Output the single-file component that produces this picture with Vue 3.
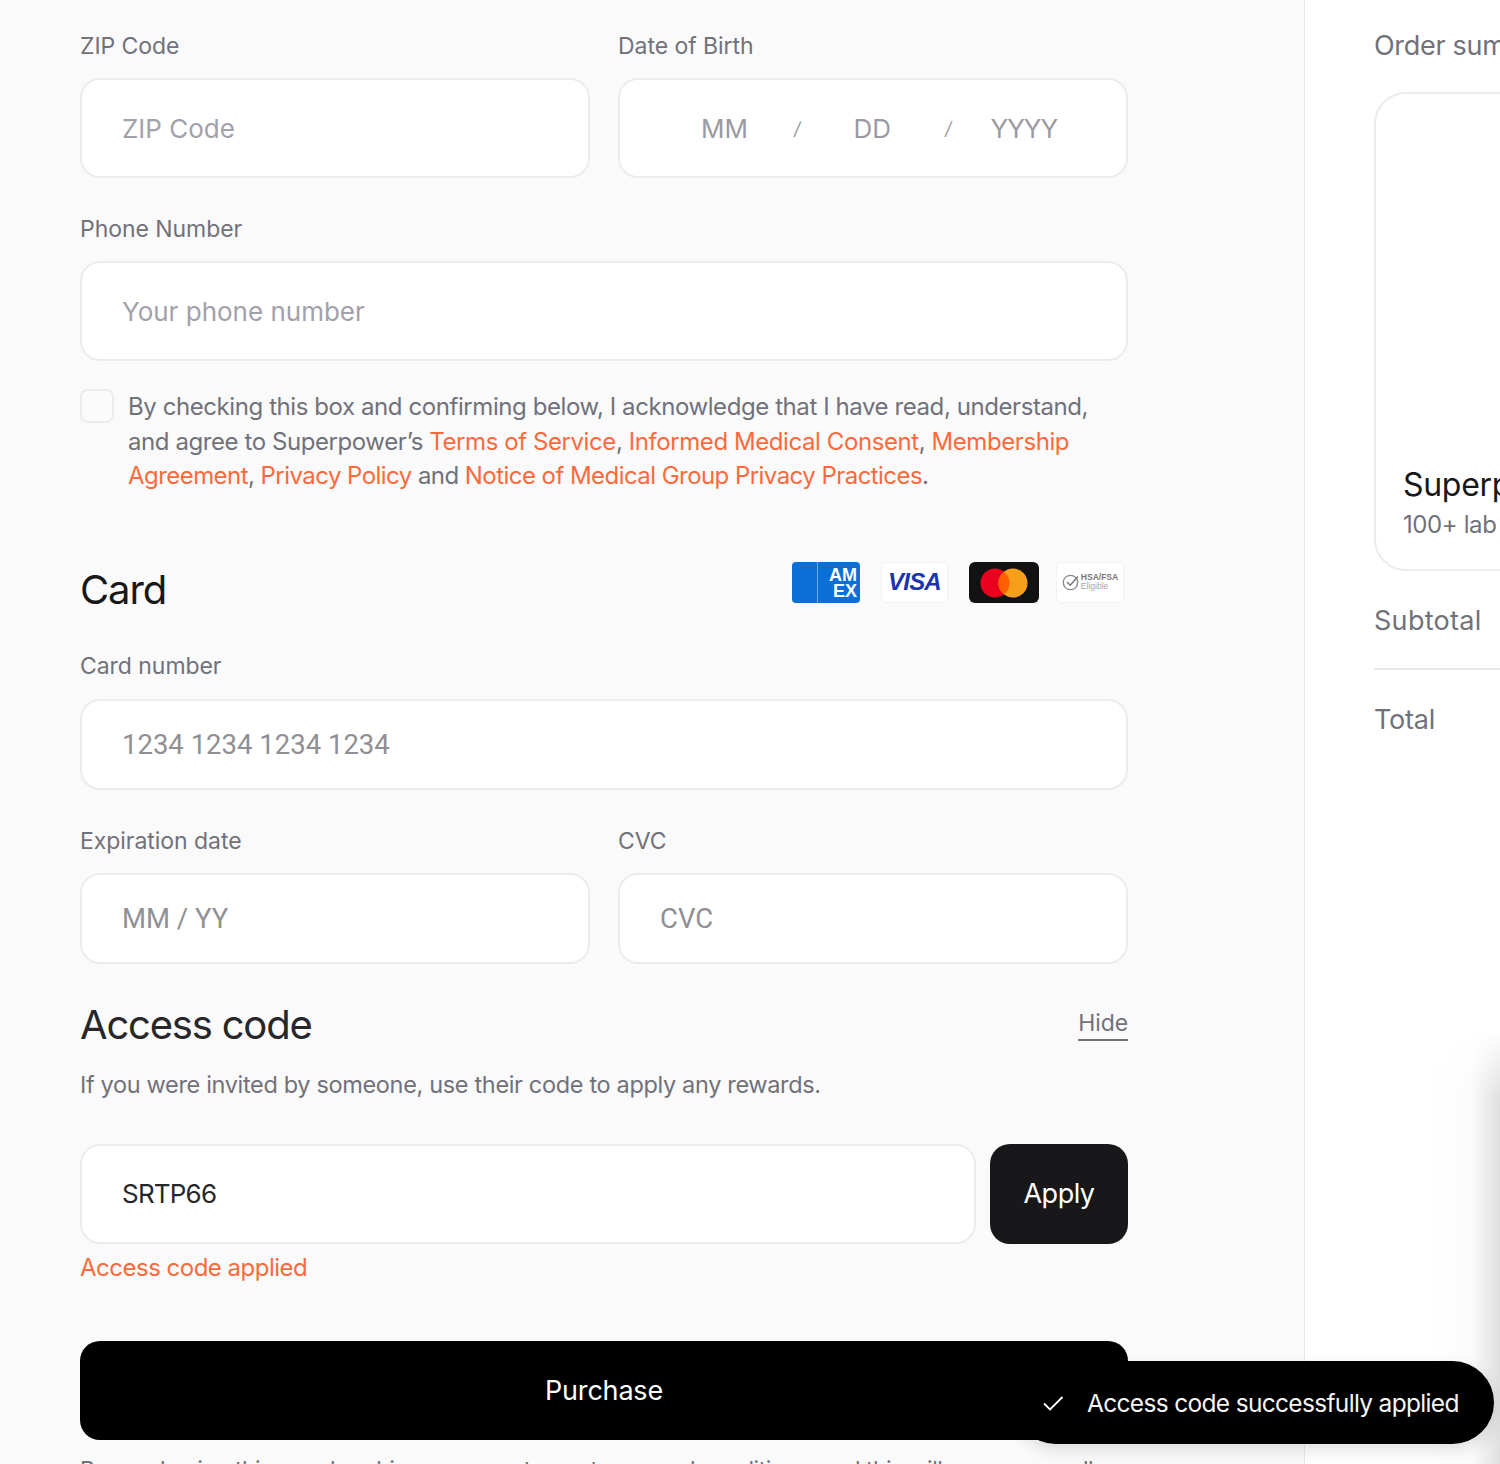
<template>
  <div class="page">
    <!-- left: checkout form -->
    <main class="form-col">
      <div class="two">
        <div class="field">
          <label>ZIP Code</label>
          <div class="box"><span class="ph">ZIP Code</span></div>
        </div>
        <div class="field">
          <label>Date of Birth</label>
          <div class="box dob">
            <span class="ph mm">MM</span>
            <span class="slash">/</span>
            <span class="ph dd">DD</span>
            <span class="slash second">/</span>
            <span class="ph yy">YYYY</span>
          </div>
        </div>
      </div>

      <div class="field phone">
        <label>Phone Number</label>
        <div class="box"><span class="ph">Your phone number</span></div>
      </div>

      <div class="consent">
        <span class="check"></span>
        <p>
          By checking this box and confirming below, I acknowledge that I have read, understand,<br />
          and agree to Superpower’s <a>Terms of Service</a>, <a>Informed Medical Consent</a>, <a>Membership</a><br />
          <span class="tight"><a>Agreement</a>, <a>Privacy Policy</a> and <a>Notice of Medical Group Privacy Practices</a>.</span>
        </p>
      </div>

      <div class="card-head">
        <h2>Card</h2>
        <div class="brands">
          <svg width="68" height="41" viewBox="0 0 68 41">
            <rect width="68" height="41" rx="4" fill="#0a6fd6" />
            <rect x="25" width="1" height="41" fill="#6aa9ea" />
            <text x="37" y="19" class="amex-t">AM</text>
            <text x="41" y="35" class="amex-t">EX</text>
          </svg>
          <div class="brand visa">VISA</div>
          <svg width="70" height="41" viewBox="0 0 70 41">
            <rect width="70" height="41" rx="6" fill="#111214" />
            <circle cx="26" cy="21" r="14.500" fill="#e8001c" />
            <circle cx="44" cy="21" r="14.500" fill="#f79e1b" />
            <path d="M35 9.630a14.500 14.500 0 0 1 0 22.740a14.500 14.500 0 0 1 0-22.740z" fill="#ff5f00" />
          </svg>
          <div class="brand hsa">
            <svg width="18" height="18" viewBox="0 0 18 18">
              <circle cx="8.500" cy="9.500" r="7.200" fill="none" stroke="#8a8a8a" stroke-width="1.300" />
              <path d="M5 9l3.200 3.200L16 3.500" fill="none" stroke="#777" stroke-width="1.500" />
            </svg>
            <span class="hsa-t"><b>HSA/FSA</b><i>Eligible</i></span>
          </div>
        </div>
      </div>

      <div class="field card-num">
        <label>Card number</label>
        <div class="box short"><span class="ph stripe">1234 1234 1234 1234</span></div>
      </div>

      <div class="two exp">
        <div class="field">
          <label>Expiration date</label>
          <div class="box short"><span class="ph stripe">MM / YY</span></div>
        </div>
        <div class="field">
          <label>CVC</label>
          <div class="box short"><span class="ph stripe">CVC</span></div>
        </div>
      </div>

      <div class="access-head">
        <h3>Access code</h3>
        <a class="hide">Hide</a>
      </div>
      <p class="invite">If you were invited by someone, use their code to apply any rewards.</p>

      <div class="code-row">
        <div class="box code"><span class="val">SRTP66</span></div>
        <button class="apply">Apply</button>
      </div>
      <div class="applied">Access code applied</div>

      <button class="purchase">Purchase</button>
      <p class="fine">By purchasing this membership you agree to our terms and conditions, and this will renew annually</p>
    </main>

    <!-- right: order summary, cut off by the window -->
    <aside class="summary">
      <div class="sum-title">Order summary</div>
      <div class="sum-card">
        <div class="sum-name">Superpower Membership</div>
        <div class="sum-sub">100+ lab tests included every year</div>
      </div>
      <div class="sum-row sub">Subtotal</div>
      <div class="sum-row total">Total</div>
    </aside>

    <div class="toast-glow"></div>
    <div class="toast">
      <svg width="24" height="24" viewBox="0 0 24 24">
        <path d="M3 12.500l6 6L21.500 6" fill="none" stroke="#fff" stroke-width="1.800" />
      </svg>
      <span>Access code successfully applied</span>
    </div>
  </div>
</template>

<script setup>
</script>

<style>
html, body {
  margin: 0;
  background: #fff;
}
</style>

<style scoped>
.page {
  position: relative;
  display: flex;
  width: 1500px;
  height: 1464px;
  overflow: hidden;
  font-family: Inter, "Liberation Sans", sans-serif;
  color: #71717a;
  -webkit-font-smoothing: antialiased;
}

/* left */
.form-col {
  box-sizing: border-box;
  flex: none;
  width: 1305px;
  padding: 32px 176px 0 80px;
  background: #fafafa;
  border-right: 1px solid #e8e8ea;
}

.two {
  display: grid;
  grid-template-columns: 510px 510px;
  gap: 28px;
}

.field label {
  display: block;
  height: 27px;
  padding-top: 1px;
  margin-bottom: 18px;
  font-size: 23px;
  line-height: 27px;
  letter-spacing: -0.05px;
  color: #71717a;
}

.box {
  box-sizing: border-box;
  display: flex;
  align-items: center;
  height: 100px;
  padding: 0 40px;
  background: #fff;
  border: 2px solid #ececee;
  border-radius: 20px;
}

.box.short {
  height: 91px;
}

.ph {
  font-size: 26px;
  letter-spacing: 0;
  color: #a1a1aa;
}

.stripe {
  font-family: Roboto, "Liberation Sans", sans-serif;
  font-size: 27.500px;
  color: #8f8f94;
}

.dob {
  padding: 0;
}

.dob .ph {
  color: #9a9aa2;
}

.mm { margin-left: 81px; }
.dd { margin-left: 53px; }
.yy { margin-left: 39px; letter-spacing: -1px; }

.slash {
  margin-left: 46px;
  font-size: 18px;
  font-style: italic;
  color: #9a9aa2;
}

.slash.second {
  margin-left: 54px;
}

.phone {
  margin-top: 37px;
}

.consent {
  display: flex;
  gap: 14px;
  margin-top: 28px;
}

.check {
  box-sizing: border-box;
  flex: none;
  width: 34px;
  height: 34px;
  background: #fbfbfb;
  border: 2px solid #ececee;
  border-radius: 8px;
}

.consent p {
  margin: 0;
  padding-top: 1px;
  font-size: 24px;
  line-height: 34.500px;
  letter-spacing: -0.42px;
  white-space: nowrap;
  color: #71717a;
}

.tight {
  letter-spacing: -0.55px;
}

.consent a,
.applied {
  color: #fb6a3c;
}

.card-head {
  display: flex;
  justify-content: space-between;
  margin-top: 67px;
  height: 68px;
}

.card-head h2 {
  margin: 5px 0 0;
  font-size: 40px;
  line-height: 48px;
  font-weight: 400;
  letter-spacing: -1.100px;
  color: #18181b;
}

.brands {
  display: flex;
  align-items: flex-start;
  gap: 21px;
  margin-top: 1px;
  margin-right: 4px;
}

.amex-t {
  font-family: "Liberation Sans", sans-serif;
  font-size: 18px;
  font-weight: 700;
  fill: #fff;
}

.brand {
  box-sizing: border-box;
  display: flex;
  align-items: center;
  justify-content: center;
  height: 41px;
  background: #fff;
  border: 1px solid #f1f1f2;
  border-radius: 5px;
}

.visa {
  width: 67px;
  font-family: "Liberation Sans", sans-serif;
  font-size: 24px;
  font-style: italic;
  font-weight: 700;
  letter-spacing: -0.8px;
  color: #1a34b0;
}

.hsa {
  width: 68px;
  margin-left: -4px;
  gap: 1px;
}

.hsa-t {
  display: flex;
  flex-direction: column;
  font-family: "Liberation Sans", sans-serif;
  font-size: 8.500px;
  line-height: 9px;
  color: #77777c;
}

.hsa-t i {
  font-style: normal;
  color: #a5a5a8;
}

.card-num {
  margin-top: 24px;
}

.card-num label {
  padding-top: 0;
  margin-bottom: 19px;
}

.exp {
  margin-top: 37px;
}

.access-head {
  display: flex;
  justify-content: space-between;
  align-items: flex-start;
  margin-top: 35px;
}

.access-head h3 {
  margin: 0;
  font-size: 40px;
  line-height: 52px;
  font-weight: 400;
  letter-spacing: -1.200px;
  color: #27272a;
}

.hide {
  margin-top: 8px;
  font-size: 23px;
  line-height: 32px;
  letter-spacing: -0.1px;
  color: #71717a;
  border-bottom: 2px solid #71717a;
}

.invite {
  margin: 17px 0 0;
  font-size: 23.500px;
  line-height: 34px;
  letter-spacing: -0.34px;
  color: #71717a;
}

.code-row {
  display: flex;
  gap: 14px;
  margin-top: 42px;
}

.code {
  flex: 1;
}

.val {
  font-size: 26px;
  letter-spacing: -0.8px;
  color: #27272a;
}

.apply {
  width: 138px;
  height: 100px;
  border: none;
  border-radius: 20px;
  background: #18181b;
  color: #fff;
  font: inherit;
  font-size: 27px;
  letter-spacing: -0.5px;
}

.applied {
  margin-top: 8px;
  font-size: 24px;
  line-height: 32px;
  letter-spacing: -0.5px;
}

.purchase {
  display: block;
  width: 100%;
  height: 99px;
  margin-top: 57px;
  border: none;
  border-radius: 20px;
  background: #000;
  color: #fff;
  font: inherit;
  font-size: 27px;
  letter-spacing: -0.2px;
}

.fine {
  margin: 13px 0 0;
  font-size: 23px;
  line-height: 34px;
  letter-spacing: -0.5px;
  white-space: nowrap;
  color: #71717a;
}

/* right */
.summary {
  box-sizing: border-box;
  flex: 1;
  min-width: 0;
  padding: 28px 0 0 69px;
  background: #fff;
  white-space: nowrap;
}

.sum-title {
  width: 400px;
  font-size: 27px;
  line-height: 36px;
  letter-spacing: -0.3px;
  color: #71717a;
}

.sum-card {
  box-sizing: border-box;
  width: 600px;
  height: 479px;
  margin-top: 28px;
  padding: 371px 0 0 27px;
  border: 2px solid #ececee;
  border-radius: 32px;
}

.sum-name {
  font-size: 32px;
  line-height: 40px;
  letter-spacing: -0.3px;
  color: #18181b;
}

.sum-sub {
  margin-top: 3px;
  font-size: 24px;
  line-height: 34px;
  letter-spacing: -0.4px;
  color: #71717a;
}

.sum-row {
  font-size: 27px;
  line-height: 36px;
  letter-spacing: 0.3px;
  color: #71717a;
}

.sub {
  margin-top: 32px;
  padding-bottom: 29px;
  width: 600px;
  border-bottom: 2px solid #e8e8ea;
}

.total {
  margin-top: 32px;
  letter-spacing: -0.2px;
}

/* toast */
.toast-glow {
  position: absolute;
  right: 0;
  top: 1030px;
  width: 70px;
  height: 434px;
  background: linear-gradient(to right, rgba(0, 0, 0, 0), rgba(0, 0, 0, 0.015) 60%, rgba(0, 0, 0, 0.13));
  -webkit-mask-image: linear-gradient(to bottom, transparent, #000 70px);
  mask-image: linear-gradient(to bottom, transparent, #000 70px);
}

.toast {
  position: absolute;
  left: 1014px;
  top: 1361px;
  box-sizing: border-box;
  display: flex;
  align-items: center;
  gap: 22px;
  width: 480px;
  height: 83px;
  padding-left: 27px;
  background: #000;
  border-radius: 42px;
  box-shadow: 0 6px 16px rgba(0, 0, 0, 0.12);
  color: #f4f4f5;
  font-size: 24.500px;
  letter-spacing: -0.68px;
}
</style>
